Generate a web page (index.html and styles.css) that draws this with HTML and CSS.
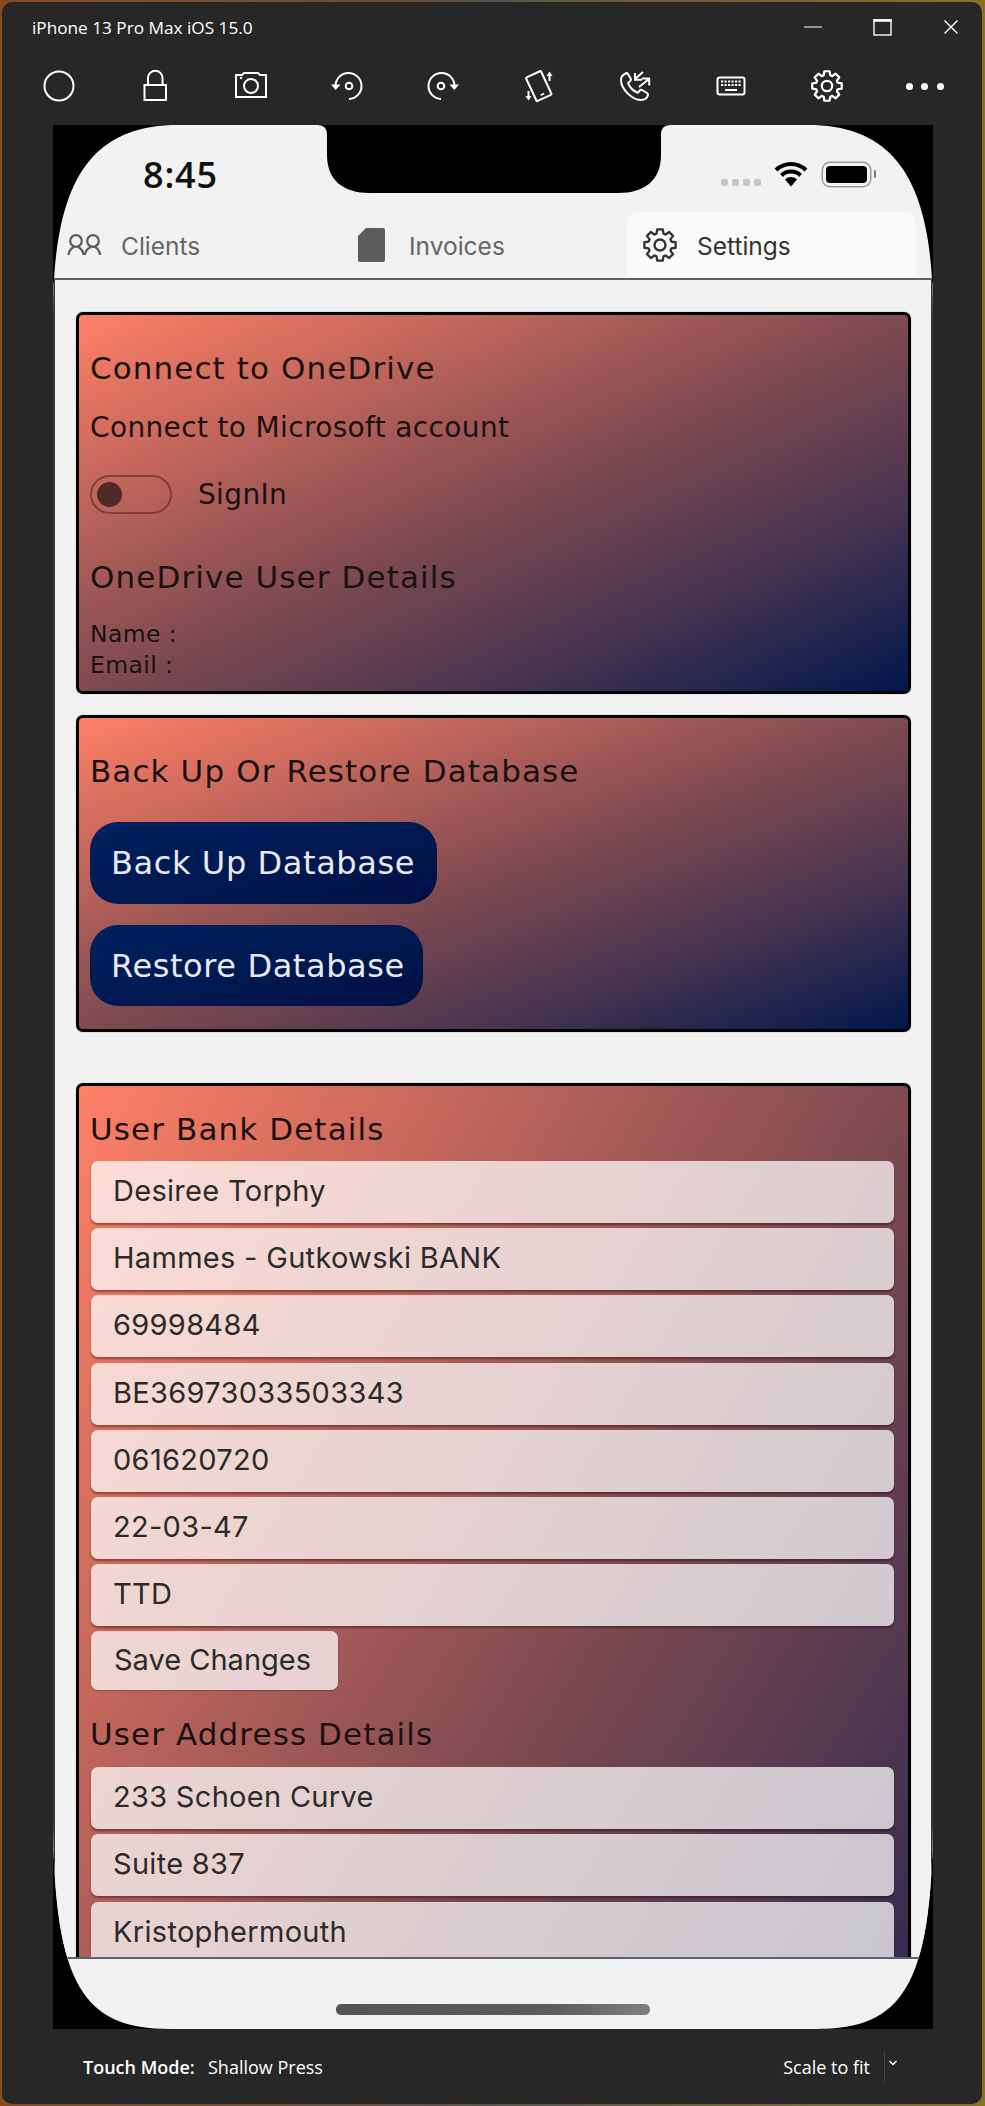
FILE: index.html
```html
<!DOCTYPE html>
<html lang="en">
<head>
<meta charset="utf-8">
<title>iPhone 13 Pro Max iOS 15.0</title>
<link rel="stylesheet" href="styles.css">
</head>
<body>
<svg class="defs" width="0" height="0" aria-hidden="true">
  <symbol id="gear" viewBox="-17 -17 34 34">
    <polygon fill="none" stroke="currentColor" stroke-width="2.2" stroke-linejoin="round" points="-2.6,-14.77 2.6,-14.77 3.27,-10.71 5.26,-9.89 8.6,-12.29 12.29,-8.6 9.89,-5.26 10.71,-3.27 14.77,-2.6 14.77,2.6 10.71,3.27 9.89,5.26 12.29,8.6 8.6,12.29 5.26,9.89 3.27,10.71 2.6,14.77 -2.6,14.77 -3.27,10.71 -5.26,9.89 -8.6,12.29 -12.29,8.6 -9.89,5.26 -10.71,3.27 -14.77,2.6 -14.77,-2.6 -10.71,-3.27 -9.89,-5.26 -12.29,-8.6 -8.6,-12.29 -5.26,-9.89 -3.27,-10.71"/>
    <circle cx="0" cy="0" r="5.2" fill="none" stroke="currentColor" stroke-width="2.2"/>
  </symbol>
</svg>
<div class="window">
  <header class="titlebar">
    <span class="title">iPhone 13 Pro Max iOS 15.0</span>
    <div class="controls">
      <svg class="ctl" viewBox="0 0 24 24"><path d="M3 12h18" stroke="#fff" stroke-width="1.2"/></svg>
      <svg class="ctl" viewBox="0 0 24 24"><rect x="4" y="5" width="17" height="15" fill="none" stroke="#fff" stroke-width="1.4"/><path d="M3.3 5.5h18.4" stroke="#fff" stroke-width="2.4"/></svg>
      <svg class="ctl" viewBox="0 0 24 24"><path d="M5.5 5.5l13 13M18.500 5.500l-13 13" stroke="#fff" stroke-width="1.4"/></svg>
    </div>
  </header>
  <nav class="toolbar">
    <div class="tool"><svg class="ico" viewBox="0 0 40 40"><circle cx="20" cy="20" r="14.500" fill="none" stroke="#fff" stroke-width="2"/></svg></div>
    <div class="tool"><svg class="ico" viewBox="0 0 40 40"><rect x="9.500" y="19" width="21.500" height="15" fill="none" stroke="#fff" stroke-width="2"/><path d="M13 19v-7a7.200 7.200 0 0 1 14.500 0v7" fill="none" stroke="#fff" stroke-width="2"/></svg></div>
    <div class="tool"><svg class="ico" viewBox="0 0 40 40"><path d="M5 9h6l2-2h14l2 2h6v22H5z" fill="none" stroke="#fff" stroke-width="2"/><circle cx="20" cy="20" r="7" fill="none" stroke="#fff" stroke-width="2"/><circle cx="10" cy="12" r="1.200" fill="#fff"/></svg></div>
    <div class="tool"><svg class="ico" viewBox="0 0 40 40"><path d="M22 33a13 13 0 1 0-13.500-13" fill="none" stroke="#fff" stroke-width="2"/><path d="M4 18.500h9.500L8.700 24z" fill="#fff"/><circle cx="22" cy="20" r="3.300" fill="none" stroke="#fff" stroke-width="2"/></svg></div>
    <div class="tool"><svg class="ico" viewBox="0 0 40 40"><path d="M18 33a13 13 0 1 1 13.500-13" fill="none" stroke="#fff" stroke-width="2"/><path d="M36 18.500h-9.500l4.800 5.500z" fill="#fff"/><circle cx="18" cy="20" r="3.300" fill="none" stroke="#fff" stroke-width="2"/></svg></div>
    <div class="tool"><svg class="ico" viewBox="0 0 40 40"><g transform="rotate(-25 20 20)"><rect x="11.500" y="7" width="16.500" height="26" rx="1" fill="none" stroke="#fff" stroke-width="2"/><path d="M17.500 29h4" stroke="#fff" stroke-width="1.600"/></g><path d="M30.500 15V8" stroke="#fff" stroke-width="2"/><path d="M27.500 10l3-4.500 3 4.500z" fill="#fff"/><path d="M9.500 25v7" stroke="#fff" stroke-width="2"/><path d="M6.500 30l3 4.500 3-4.500z" fill="#fff"/></svg></div>
    <div class="tool"><svg class="ico" viewBox="0 0 40 40"><path d="M11 7.500c-3 1-5 3-5 6.500 0 9 11 20 20 20 3.500 0 6-1.500 7-5 .3-1-.2-1.500-1-2l-5-3c-1-.5-1.500-.3-2.200.5l-2 2.300c-4-1.500-8-5.500-9.800-9.800l2.300-2c.8-.7 1-1.200.5-2.200l-3-5c-.5-.8-1-1-1.800-.8z" fill="none" stroke="#fff" stroke-width="2" stroke-linejoin="round"/><path d="M28 6l-8.500 7.500M20 7v6.800h7M24 21l10-8M27 12.500h7.200v7" fill="none" stroke="#fff" stroke-width="2"/></svg></div>
    <div class="tool"><svg class="ico kb" viewBox="0 0 40 40"><rect x="6.500" y="11.500" width="27" height="17" rx="2" fill="none" stroke="#fff" stroke-width="2"/><path d="M10 15.500h20M10 19h20" stroke="#fff" stroke-width="2.200" stroke-dasharray="2.200 1.300"/><path d="M14 24h12" stroke="#fff" stroke-width="2"/></svg></div>
    <div class="tool"><svg class="ico gear-w"><use href="#gear"/></svg></div>
    <div class="tool dots"><i></i><i></i><i></i></div>
  </nav>

  <main class="device">
    <div class="phone">
      <svg class="notch" viewBox="0 0 352 68"><path d="M0 0Q9 0 9 10V30C9 55 25 68 52 68H300C327 68 343 55 343 30V10Q343 0 352 0Z" fill="#000"/></svg>
      <div class="head">
        <div class="status">
          <span class="time">8:45</span>
          <div class="status-right">
            <div class="signal"><i></i><i></i><i></i><i></i></div>
            <svg class="wifi" viewBox="0 0 34 26"><path d="M2 9a21.500 21.500 0 0 1 30 0M7.500 14.500a13.500 13.500 0 0 1 19 0" fill="none" stroke="#000" stroke-width="4"/><path d="M11 18.500a8.500 8.500 0 0 1 12 0L17 25.500z" fill="#000"/></svg>
            <div class="battery"><span class="cell"></span><span class="nub"></span></div>
          </div>
        </div>
        <div class="tabs">
          <div class="tab tab-clients">
            <svg class="t-clients" viewBox="0 0 34 22"><g fill="none" stroke="#5c5c5c" stroke-width="2.200"><circle cx="9" cy="7" r="5.800"/><circle cx="26" cy="7" r="5.800"/><path d="M1.500 21c.3-4 2.500-6.500 5.500-8M16.500 21c-.3-4-2.500-6.500-5.500-8M18 21c.3-4 2.500-6.500 6-8M33 21c-.3-4-2.500-6.500-5-8"/></g></svg>
            <span class="t-label">Clients</span>
          </div>
          <div class="tab tab-invoices">
            <svg class="t-invoices" viewBox="0 0 27 34"><path d="M8 0H25a2 2 0 0 1 2 2V32a2 2 0 0 1-2 2H2a2 2 0 0 1-2-2V8z" fill="#5c5c5c"/></svg>
            <span class="t-label">Invoices</span>
          </div>
          <div class="tab tab-settings">
            <svg class="t-gear"><use href="#gear"/></svg>
            <span class="t-label">Settings</span>
          </div>
        </div>
      </div>

      <div class="scroller">
        <section class="card card-one">
          <h2 class="heading h-first">Connect to OneDrive</h2>
          <p class="line">Connect to Microsoft account</p>
          <div class="signin">
            <span class="switch"><span class="knob"></span></span>
            <span class="line">SignIn</span>
          </div>
          <h2 class="heading h-details">OneDrive User Details</h2>
          <p class="small s-name">Name :</p>
          <p class="small">Email :</p>
        </section>

        <section class="card card-two">
          <h2 class="heading h-backup">Back Up Or Restore Database</h2>
          <button class="pill pill-up">Back Up Database</button>
          <button class="pill pill-restore">Restore Database</button>
        </section>

        <section class="card card-three">
          <h2 class="heading h-bank">User Bank Details</h2>
          <div class="field">Desiree Torphy</div>
          <div class="field">Hammes - Gutkowski BANK</div>
          <div class="field">69998484</div>
          <div class="field">BE36973033503343</div>
          <div class="field">061620720</div>
          <div class="field">22-03-47</div>
          <div class="field">TTD</div>
          <button class="save">Save Changes</button>
          <h2 class="heading h-address">User Address Details</h2>
          <div class="field">233 Schoen Curve</div>
          <div class="field">Suite 837</div>
          <div class="field">Kristophermouth</div>
        </section>
      </div>

      <div class="foot"><span class="home"></span></div>
    </div>
  </main>

  <footer class="statusbar">
    <strong class="mode">Touch Mode:</strong>
    <span class="press">Shallow Press</span>
    <span class="scale">Scale to fit</span>
    <span class="sep"></span>
    <svg class="chev" viewBox="0 0 10 8"><path d="M1.500 2l3.500 3.500L8.500 2" fill="none" stroke="#fff" stroke-width="1.400"/></svg>
  </footer>
</div>
</body>
</html>
```

FILE: styles.css
```css
* { box-sizing: border-box; }
html, body { margin: 0; padding: 0; }
body {
  width: 985px;
  height: 2106px;
  overflow: hidden;
  background: linear-gradient(90deg, #8a4a1c 0%, #5c5248 50%, #8b6f24 100%);
  font-family: "Inter", "Liberation Sans", sans-serif;
}
.defs { position: absolute; }
.window {
  margin: 2px 3px 2px 2px;
  height: 2102px;
  border-radius: 10px;
  background: #272727;
  color: #fff;
  overflow: hidden;
  font-family: "Open Sans", "Liberation Sans", sans-serif;
}

/* title bar */
.titlebar {
  height: 50px;
  display: flex;
  align-items: center;
  padding: 0 8px 0 30px;
}
.title { flex: 1; font-size: 17.200px; }
.controls { display: flex; gap: 23px; }
.ctl { width: 46px; height: 24px; }

/* toolbar */
.toolbar {
  height: 73px;
  display: flex;
  align-items: center;
  padding: 0 0 6px 9px;
}
.tool { width: 96px; display: flex; justify-content: center; }
.ico { width: 40px; height: 40px; }
.gear-w { color: #fff; width: 34px; height: 34px; }
.dots { gap: 8.500px; padding-top: 2px; padding-left: 3px; }
.dots i { width: 7px; height: 7px; border-radius: 50%; background: #fff; }

/* device */
.device {
  margin-left: 51px;
  width: 880px;
  height: 1904px;
  background: #000;
}
.phone {
  position: relative;
  height: 100%;
  background: #f2f2f2;
  clip-path: path("M0 190C0 60 35 0 125 0H755C845 0 880 60 880 190V1700C878 1860 850 1904 763 1904H117C30 1904 2 1860 0 1700Z");
  display: flex;
  flex-direction: column;
}
.notch { position: absolute; left: 265px; top: 0; width: 352px; height: 68px; }
.head { height: 153px; flex: none; }
.status {
  height: 87px;
  padding: 11px 57px 0 90px;
  display: flex;
  align-items: center;
  justify-content: space-between;
}
.time { font-size: 36px; font-weight: 600; color: #111; letter-spacing: .8px; }
.status-right { display: flex; align-items: center; }
.signal { display: flex; gap: 4px; margin-top: 17px; margin-right: 13px; }
.signal i { width: 7px; height: 7px; border-radius: 2px; background: #c6c6c6; }
.wifi { width: 34px; height: 26px; margin-right: 15px; }
.battery { display: flex; align-items: center; }
.cell {
  width: 47px;
  height: 23px;
  border-radius: 7px;
  background: #000;
  border: 3px solid #f2f2f2;
  box-shadow: 0 0 0 1.500px #9a9a9a;
}
.nub { width: 2px; height: 8px; margin-left: 4px; border-radius: 0 2px 2px 0; background: #777; }

.tabs {
  height: 66px;
  display: grid;
  grid-template-columns: 287px 287px 289px;
  color: #666;
}
.tab { display: flex; align-items: center; padding-left: 14px; }
.t-label { font-size: 24.500px; font-family: "Inter", "Liberation Sans", sans-serif; padding-top: 1px; }
.t-clients { width: 34px; height: 22px; margin-right: 20px; }
.tab-invoices { padding-left: 18px; }
.t-invoices { width: 27px; height: 34px; margin-right: 24px; }
.tab-settings {
  padding-left: 15px;
  background: #f9f9f9;
  color: #333;
  border-radius: 12px 12px 0 0;
}
.t-gear { width: 36px; height: 36px; margin-right: 19px; color: #333; }

/* content */
.scroller {
  flex: 1;
  min-height: 0;
  overflow: hidden;
  border: solid #5a6270;
  border-width: 2px 2px 2px;
  border-left-color: #34383e;
  border-right-color: #34383e;
  padding: 32px 20px 0 21px;
  background: #f2f2f2;
}
.card {
  border: 3.500px solid #000;
  border-radius: 7px;
  box-shadow: 0 0 1px #555;
  background: linear-gradient(to bottom right, #ff8066 0%, #7f4a50 50%, #47344f 75%, #00174d 100%);
  padding: 0 14px 0 11px;
  color: #1a1212;
  font-family: "DejaVu Sans", "Inter", sans-serif;
}
.card-one { height: 382px; }
.card-two { height: 317px; margin-top: 21px; }
.card-three { height: 1380px; margin-top: 51px; }

.heading { margin: 0; font-size: 31px; line-height: 40px; font-weight: 400; letter-spacing: 1.1px; }
.h-first { margin-top: 33px; }
.line { margin: 0; font-size: 28px; line-height: 36px; letter-spacing: .35px; }
.card-one .line { margin-top: 22px; }
.signin { display: flex; align-items: center; gap: 26px; margin-top: 29px; }
.signin .line { margin-top: 0; }
.switch {
  width: 82px;
  height: 39px;
  border-radius: 20px;
  border: 2px solid rgba(60, 20, 20, .45);
  display: flex;
  align-items: center;
  padding-left: 5px;
}
.knob { width: 25px; height: 25px; border-radius: 50%; background: #4e2a28; }
.h-details { margin-top: 43px; }
.small { margin: 0; font-size: 23.500px; line-height: 31px; letter-spacing: .4px; }
.s-name { margin-top: 22px; }

.h-backup { margin-top: 33px; }
.pill {
  display: block;
  border: 0;
  padding: 0 0 0 21px;
  height: 82px;
  border-radius: 28px;
  background: linear-gradient(to bottom right, #00225f, #001044);
  color: #e8e8f0;
  font-family: "DejaVu Sans", "Inter", sans-serif;
  font-size: 32px;
  letter-spacing: .6px;
  text-align: left;
}
.pill-up { margin-top: 31px; width: 347px; }
.pill-restore { margin-top: 21px; width: 333px; height: 81px; }

.h-bank { margin-top: 23px; }
.field {
  height: 62px;
  margin: 5.200px 0 0 1px;
  padding: 0 22px 3px;
  display: flex;
  align-items: center;
  background: rgba(255, 255, 255, .73);
  border-radius: 7px;
  box-shadow: 0 2px 2px rgba(40, 0, 0, .4);
  font-family: "Inter", "Liberation Sans", sans-serif;
  font-size: 29px;
  letter-spacing: .3px;
  color: #2b2b2b;
}
.h-bank + .field { margin-top: 12px; }
.save {
  display: block;
  width: 247px;
  height: 59px;
  margin: 5px 0 0 1px;
  border: 0;
  padding: 0 0 3px 23px;
  text-align: left;
  border-radius: 7px;
  background: rgba(255, 255, 255, .73);
  box-shadow: 0 1px 2px rgba(40, 0, 0, .3);
  color: #2b2b2b;
  font-family: "Inter", "Liberation Sans", sans-serif;
  font-size: 29px;
}
.h-address { margin-top: 24px; }
.h-address + .field { margin-top: 13px; }

/* home bar */
.foot { height: 70px; flex: none; display: flex; justify-content: center; padding-top: 45px; }
.home {
  width: 314px;
  height: 11px;
  border-radius: 5px;
  background: linear-gradient(90deg, #555, #5c5c5c 70%, #808080);
}

/* bottom bar */
.statusbar {
  height: 75px;
  display: flex;
  align-items: center;
  padding: 0 0 0 81px;
  font-size: 18px;
}
.mode { font-weight: 600; width: 125px; }
.press { flex: 1; }
.scale { margin-right: 14px; }
.sep { width: 1px; height: 31px; background: #444; margin-right: 3px; }
.chev { width: 10px; height: 8px; margin-right: 84px; margin-top: -8px; }
```
